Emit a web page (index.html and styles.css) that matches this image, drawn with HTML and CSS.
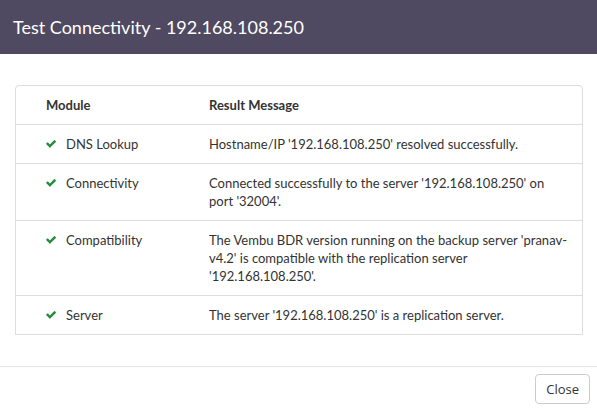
FILE: index.html
```html
<!DOCTYPE html>
<html>
<head>
<meta charset="utf-8">
<link rel="stylesheet" href="styles.css">
</head>
<body>
<div class="modal">
  <div class="modal-header">
    <h4 class="modal-title">Test Connectivity - 192.168.108.250</h4>
  </div>
  <div class="modal-body">
    <div class="panel">
      <table class="results">
        <thead>
          <tr><th class="col-module">Module</th><th class="col-msg">Result Message</th></tr>
        </thead>
        <tbody>
          <tr>
            <td class="col-module"><span class="mod"><svg class="check" viewBox="99 370 1572 1156" width="10" height="8"><path d="M1671 566q0 40-28 68l-724 724-136 136q-28 28-68 28t-68-28l-136-136-362-362q-28-28-28-68t28-68l136-136q28-28 68-28t68 28l294 295 656-657q28-28 68-28t68 28l136 136q28 28 28 68z"/></svg>DNS Lookup</span></td>
            <td class="col-msg">Hostname/IP '192.168.108.250' resolved successfully.</td>
          </tr>
          <tr>
            <td class="col-module"><span class="mod"><svg class="check" viewBox="99 370 1572 1156" width="10" height="8"><path d="M1671 566q0 40-28 68l-724 724-136 136q-28 28-68 28t-68-28l-136-136-362-362q-28-28-28-68t28-68l136-136q28-28 68-28t68 28l294 295 656-657q28-28 68-28t68 28l136 136q28 28 28 68z"/></svg>Connectivity</span></td>
            <td class="col-msg">Connected successfully to the server '192.168.108.250' on port '32004'.</td>
          </tr>
          <tr>
            <td class="col-module"><span class="mod"><svg class="check" viewBox="99 370 1572 1156" width="10" height="8"><path d="M1671 566q0 40-28 68l-724 724-136 136q-28 28-68 28t-68-28l-136-136-362-362q-28-28-28-68t28-68l136-136q28-28 68-28t68 28l294 295 656-657q28-28 68-28t68 28l136 136q28 28 28 68z"/></svg>Compatibility</span></td>
            <td class="col-msg">The Vembu BDR version running on the backup server 'pranav-v4.2' is compatible with the replication server '192.168.108.250'.</td>
          </tr>
          <tr>
            <td class="col-module"><span class="mod"><svg class="check" viewBox="99 370 1572 1156" width="10" height="8"><path d="M1671 566q0 40-28 68l-724 724-136 136q-28 28-68 28t-68-28l-136-136-362-362q-28-28-28-68t28-68l136-136q28-28 68-28t68 28l294 295 656-657q28-28 68-28t68 28l136 136q28 28 28 68z"/></svg>Server</span></td>
            <td class="col-msg">The server '192.168.108.250' is a replication server.</td>
          </tr>
        </tbody>
      </table>
    </div>
  </div>
  <div class="modal-footer">
    <button class="btn">Close</button>
  </div>
</div>
</body>
</html>
```
FILE: styles.css
```css
html, body {
  margin: 0;
  padding: 0;
  background: #ffffff;
}
body {
  font-family: Lato, "Open Sans", "Liberation Sans", sans-serif;
  color: #333333;
  font-size: 13px;
}
.modal {
  width: 597px;
}
.modal-header {
  background: #4f4a61;
  height: 54px;
  padding: 0 13px;
  display: flex;
  align-items: center;
  box-sizing: border-box;
}
.modal-title {
  margin: 0;
  font-size: 18px;
  font-weight: 400;
  color: #ffffff;
  line-height: 20px;
}
.modal-body {
  padding: 31px 14px 31px 15px;
}
.panel {
  border: 1px solid #dddddd;
  border-radius: 4px 4px 0 0;
}
.results {
  width: 100%;
  border-collapse: collapse;
  table-layout: fixed;
}
.results th, .results td {
  text-align: left;
  vertical-align: top;
  padding: 10px 0;
  line-height: 18px;
  box-sizing: border-box;
}
.results th {
  font-weight: 700;
}
.results tbody td {
  border-top: 1px solid #dddddd;
}
.col-module {
  width: 193px;
  padding-left: 30px !important;
}
.col-msg {
  padding-right: 14px !important;
}
.mod {
  display: flex;
  align-items: center;
}
.check {
  margin-right: 10px;
  flex: none;
  fill: #238a3a;
}
.modal-footer {
  border-top: 1px solid #e5e5e5;
  padding: 7px 7px 8px;
  display: flex;
  justify-content: flex-end;
}
.btn {
  font-family: "Open Sans", Lato, "Liberation Sans", sans-serif;
  font-size: 13px;
  color: #333333;
  background: #ffffff;
  border: 1px solid #cccccc;
  border-radius: 4px;
  height: 30px;
  padding: 0 10px;
  line-height: 28px;
}
```
